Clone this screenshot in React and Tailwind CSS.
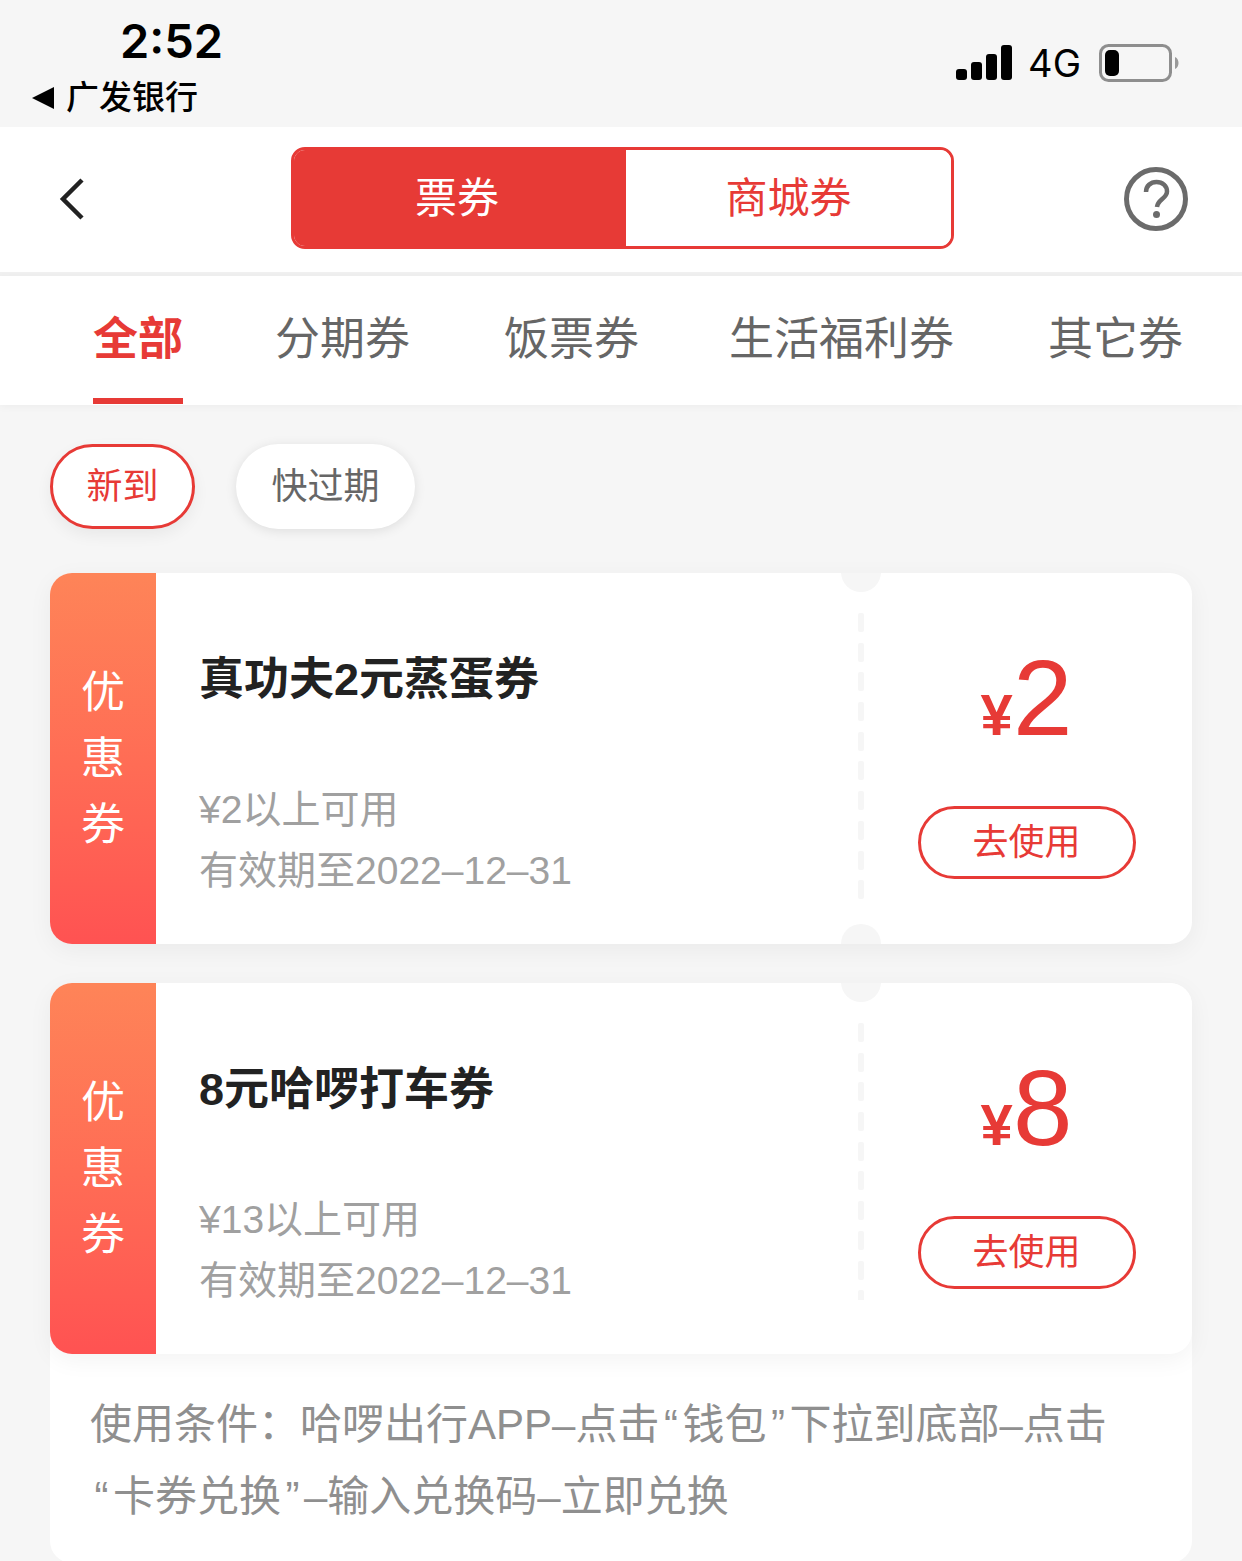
import React from 'react';

const base = "font-['Liberation_Sans','Noto_Sans_CJK_SC',sans-serif]";

const tabs = [
  { label: '全部', active: true, cls: 'ml-[93px] w-[90px]' },
  { label: '分期券', cls: 'ml-[92px] w-[134px]' },
  { label: '饭票券', cls: 'ml-[95px] w-[134px]' },
  { label: '生活福利券', cls: 'ml-[91px] w-[224px]' },
  { label: '其它券', cls: 'ml-[95px] w-[134px]' },
];

const coupons = [
  { title: '真功夫2元蒸蛋券', min: '¥2以上可用', amount: '2', notch: true },
  { title: '8元哈啰打车券', min: '¥13以上可用', amount: '8', notch: false },
];

function SignalIcon() {
  return (
    <svg width="56" height="36" viewBox="0 0 56 36" fill="#000">
      <rect x="0" y="24" width="11" height="11" rx="3" />
      <rect x="15" y="17" width="11" height="18" rx="3" />
      <rect x="30" y="9" width="11" height="26" rx="3" />
      <rect x="45" y="0" width="11" height="35" rx="3" />
    </svg>
  );
}

function BatteryIcon() {
  return (
    <svg width="80" height="38" viewBox="0 0 80 38">
      <rect x="1.500" y="1.500" width="70" height="35" rx="8" fill="none" stroke="#8e8e8e" strokeWidth="3" />
      <rect x="6" y="6" width="14" height="26" rx="5" fill="#000" />
      <path d="M76 13c2.500 1 3.500 3.500 3.500 6s-1 5-3.500 6z" fill="#9a9a9a" />
    </svg>
  );
}

function Quote({ children }) {
  return <span className="inline-block w-[23px] text-center">{children}</span>;
}

function Coupon({ title, min, amount, notch }) {
  return (
    <div className="relative flex h-[371px] overflow-hidden rounded-[22px] bg-white shadow-[0_6px_24px_rgba(0,0,0,0.05)]">
      <div className="flex w-[106px] shrink-0 flex-col items-center justify-center bg-gradient-to-b from-[#fe8458] to-[#ff5252] text-[44px] leading-[66px] text-white">
        <span>优</span>
        <span>惠</span>
        <span>券</span>
      </div>
      <div className="w-[703px] shrink-0 pl-[43px] pt-[78px]">
        <div className="text-[45px] font-bold leading-[58px] text-[#222]">{title}</div>
        <div className="mt-[70px] text-[39px] leading-[61px] text-[#a0a0a0]">
          <div>{min}</div>
          <div>有效期至2022–12–31</div>
        </div>
      </div>
      <div className="relative w-0">
        <div className="absolute left-[-18px] top-[-21px] h-[40px] w-[40px] rounded-full bg-[#f6f6f6]" />
        {notch && <div className="absolute bottom-[-20px] left-[-18px] h-[40px] w-[40px] rounded-full bg-[#f6f6f6]" />}
        <div className={`absolute left-[-1px] top-[40px] flex flex-col gap-[10.700px] overflow-hidden ${notch ? 'h-[287px]' : 'h-[277px]'}`}>
          {Array.from({ length: 10 }).map((_, i) => (
            <div key={i} className="h-[19px] w-[6px] shrink-0 rounded-[2px] bg-[#f6f6f6]" />
          ))}
        </div>
      </div>
      <div className="flex flex-1 flex-col items-center pl-[2px] pt-[72px]">
        <div className="flex h-[106px] items-baseline text-[#e73a36]">
          <span className="text-[58px] font-bold leading-[106px]">¥</span>
          <span className="text-[107px] leading-[106px]">{amount}</span>
        </div>
        <button className="mt-[55px] h-[73px] w-[218px] rounded-full border-[3px] border-[#e73a36] text-[36px] text-[#e73a36]">
          去使用
        </button>
      </div>
    </div>
  );
}

export default function App() {
  return (
    <div className={`h-[1561px] w-[1242px] overflow-hidden bg-[#f6f6f6] ${base}`}>
      {/* status bar */}
      <div className="flex h-[127px] justify-between">
        <div className="pl-[32px] pt-[12px]">
          <div className="pl-[88px] font-['Inter',sans-serif] text-[47px] font-semibold leading-[58px] text-black">2:52</div>
          <div className="mt-[6px] flex items-center text-[33px] font-medium leading-[44px] text-black">
            <span className="mr-[12px] h-0 w-0 border-y-[11px] border-r-[22px] border-y-transparent border-r-black" />
            广发银行
          </div>
        </div>
        <div className="flex items-center gap-[16px] pb-[2px] pr-[63px]">
          <SignalIcon />
          <span className="mr-[2px] font-['Inter',sans-serif] text-[38px] leading-[44px] text-black">4G</span>
          <BatteryIcon />
        </div>
      </div>

      {/* top switch */}
      <div className="flex h-[149px] items-start border-b-[4px] border-[#f0f0f0] bg-white pl-[57px] pr-[54px] pt-[20px]">
        <svg className="mt-[30px] shrink-0" width="30" height="44" viewBox="0 0 30 44" fill="none" stroke="#222" strokeWidth="4.500">
          <path d="M25 3 6 22l19 19" />
        </svg>
        <div className="ml-[204px] flex h-[102px] w-[663px] overflow-hidden rounded-[14px] border-[3px] border-[#e73a36] text-[42px]">
          <div className="flex w-[332px] items-center justify-center bg-[#e73a36] pr-[6px] text-white">票券</div>
          <div className="flex flex-1 items-center justify-center bg-white text-[#e73a36]">商城券</div>
        </div>
        <svg className="ml-auto mt-[20px]" width="64" height="64" viewBox="0 0 64 64" fill="none">
          <circle cx="32" cy="32" r="29.500" stroke="#6b6b6b" strokeWidth="5" />
          <path d="M22 25c0-6 4.500-10 10.500-10S43 19 43 24.500c0 7-9.500 8-10 15.500" stroke="#6b6b6b" strokeWidth="4.500" />
          <circle cx="32.500" cy="47.500" r="3.500" fill="#6b6b6b" />
        </svg>
      </div>

      {/* category tabs */}
      <div className="relative flex h-[129px] bg-white shadow-[0_2px_8px_rgba(0,0,0,0.04)]">
        {tabs.map((t) => (
          <div
            key={t.label}
            className={`${t.cls} h-[128px] shrink-0 whitespace-nowrap border-b-[6px] pt-[34px] text-[45px] leading-[60px] ${
              t.active ? 'border-[#e73a36] font-bold text-[#e73a36]' : 'border-transparent text-[#666]'
            }`}
          >
            {t.label}
          </div>
        ))}
      </div>

      {/* filters */}
      <div className="flex gap-[41px] pl-[50px] pt-[39px]">
        <div className="flex h-[85px] w-[145px] items-center justify-center rounded-full border-[3px] border-[#e73a36] bg-white text-[36px] text-[#e73a36] shadow-[0_6px_16px_rgba(0,0,0,0.06)]">
          新到
        </div>
        <div className="flex h-[85px] w-[179px] items-center justify-center rounded-full bg-white text-[36px] text-[#666] shadow-[0_2px_12px_rgba(0,0,0,0.1)]">
          快过期
        </div>
      </div>

      {/* coupon list */}
      <div className="mx-[50px] mt-[44px] flex flex-col gap-[39px]">
        <Coupon {...coupons[0]} />
        <div className="rounded-[22px] bg-white">
          <Coupon {...coupons[1]} />
          <div className="px-[40px] pb-[30px] pt-[35px] text-[42px] leading-[72px] text-[#8f8f8f]">
            使用条件：哈啰出行APP–点击<Quote>“</Quote>钱包<Quote>”</Quote>下拉到底部–点击
            <br />
            <Quote>“</Quote>卡券兑换<Quote>”</Quote>–输入兑换码–立即兑换
          </div>
        </div>
      </div>
    </div>
  );
}
